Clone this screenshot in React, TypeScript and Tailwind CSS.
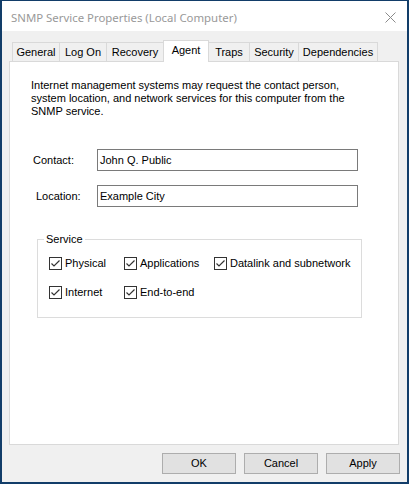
import React from "react";

const tabs = [
  { label: "General", w: "w-[48px]" },
  { label: "Log On", w: "w-[48px]" },
  { label: "Recovery", w: "w-[58px]" },
  { label: "Agent", w: "w-[46px]", active: true },
  { label: "Traps", w: "w-[42px]" },
  { label: "Security", w: "w-[50px]" },
  { label: "Dependencies", w: "w-[80px]" },
];

function Check({ label, className = "" }: { label: string; className?: string }) {
  return (
    <div className={"flex items-center h-[15px] " + className}>
      <div className="w-[13px] h-[13px] border border-[#333333] bg-white flex items-center justify-center">
        <svg width="11" height="11" viewBox="0 0 11 11">
          <path d="M1.5 5.5 L4 8 L9.5 2.5" fill="none" stroke="#333333" strokeWidth="1.2" />
        </svg>
      </div>
      <span className="ml-[3px]">{label}</span>
    </div>
  );
}

export default function App() {
  return (
    <div
      className="w-[409px] h-[484px] bg-[#123d69] pt-px pl-[2px] pr-[2px] pb-[2px] text-[11px] text-black"
      style={{ fontFamily: '"Liberation Sans", Arial, sans-serif' }}
    >
      <div className="w-full h-full bg-[#f0f0f0] flex flex-col">
        {/* title bar */}
        <div className="h-[30px] bg-white flex items-center pl-[9px] pr-[11px] shrink-0">
          <span
            className="text-[11.4px] text-[#999999] flex-1 pt-[4px]"
            style={{ fontFamily: '"Noto Sans", "Open Sans", sans-serif' }}
          >
            SNMP Service Properties (Local Computer)
          </span>
          <svg width="11" height="11" viewBox="0 0 11 11" className="mt-[3px]">
            <path d="M0.5 0.5 L10.5 10.5 M10.5 0.5 L0.5 10.5" stroke="#8a8a8a" strokeWidth="1" />
          </svg>
        </div>

        {/* tabs */}
        <div className="flex items-end h-[30px] pl-[10px] shrink-0 relative z-10">
          {tabs.map((t, i) => (
            <div
              key={t.label}
              className={
                t.w +
                " border-l border-t border-r border-[#d9d9d9] flex justify-center " +
                (i > 0 ? "-ml-px " : "") +
                (t.active
                  ? "h-[22px] bg-white relative z-10 -mb-px pt-[3px]"
                  : "h-[19px] bg-[#f0f0f0] pt-[3px]")
              }
            >
              <span className="leading-[13px]">{t.label}</span>
            </div>
          ))}
        </div>

        {/* panel */}
        <div className="ml-[7px] mr-[8px] h-[384px] bg-white border border-[#d9d9d9] shrink-0 flex flex-col">
          <p className="ml-[21px] mt-[17px] leading-[13px] w-[330px]">
            Internet management systems may request the contact person,
            <br />
            system location, and network services for this computer from the
            <br />
            SNMP service.
          </p>

          <div className="flex items-center mt-[31px] h-[22px]">
            <span className="ml-[23px] w-[64px]">Contact:</span>
            <div className="w-[261px] h-[22px] border border-[#7a7a7a] flex items-center pl-[2px]">
              John Q. Public
            </div>
          </div>
          <div className="flex items-center mt-[14px] h-[22px]">
            <span className="ml-[26px] w-[61px]">Location:</span>
            <div className="w-[261px] h-[22px] border border-[#7a7a7a] flex items-center pl-[2px]">
              Example City
            </div>
          </div>

          <div className="relative ml-[27px] mt-[32px] w-[325px] h-[79px] border border-[#dcdcdc]">
            <span className="absolute left-[6px] -top-[8px] bg-white px-[2px] leading-[14px]">
              Service
            </span>
            <div className="flex flex-col pl-[11px] pt-[16px]">
              <div className="flex">
                <Check label="Physical" className="w-[75px]" />
                <Check label="Applications" className="w-[90px]" />
                <Check label="Datalink and subnetwork" />
              </div>
              <div className="flex mt-[14px]">
                <Check label="Internet" className="w-[75px]" />
                <Check label="End-to-end" />
              </div>
            </div>
          </div>
        </div>

        {/* buttons */}
        <div className="flex justify-end gap-[8px] mt-[8px] mr-[7px]">
          {["OK", "Cancel", "Apply"].map((b) => (
            <div
              key={b}
              className="w-[74px] h-[21px] bg-[#e1e1e1] border border-[#adadad] flex items-center justify-center"
            >
              {b}
            </div>
          ))}
        </div>
      </div>
    </div>
  );
}
